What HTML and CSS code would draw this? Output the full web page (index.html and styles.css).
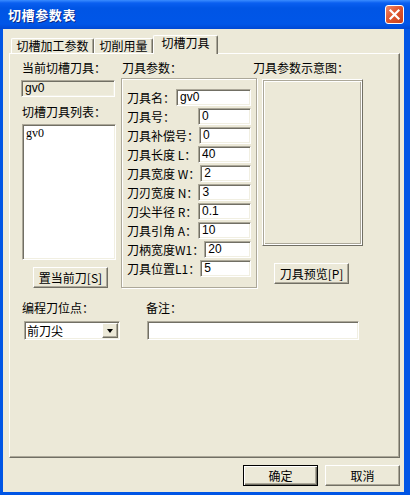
FILE: index.html
```html
<!DOCTYPE html>
<html lang="zh">
<head>
<meta charset="utf-8">
<title>切槽参数表</title>
<link rel="stylesheet" href="styles.css">
</head>
<body>
<div class="window">
  <div class="titlebar">
    <span class="title">切槽参数表</span>
    <span class="close">
      <svg width="17" height="17" viewBox="0 0 17 17"><path d="M4.5 4.5 L12.5 12.5 M12.5 4.5 L4.5 12.5" stroke="#fff" stroke-width="2.2" stroke-linecap="square"/></svg>
    </span>
  </div>
  <div class="client">
    <div class="tabs">
      <div class="tab tab-1">切槽加工参数</div>
      <div class="tab tab-2">切削用量</div>
      <div class="tab tab-3 active">切槽刀具</div>
    </div>
    <div class="panel">
      <div class="top">
        <div class="col-left">
          <div class="label">当前切槽刀具：</div>
          <div class="field readonly wide-left">gv0</div>
          <div class="label list-label">切槽刀具列表：</div>
          <div class="listbox"><div class="item">gv0</div></div>
          <div class="btn btn-set">置当前刀[S]</div>
        </div>
        <div class="col-mid">
          <div class="label">刀具参数：</div>
          <div class="group">
            <div class="row"><span>刀具名：</span><div class="field name">gv0</div></div>
            <div class="row"><span>刀具号：</span><div class="field num">0</div></div>
            <div class="row"><span>刀具补偿号：</span><div class="field num">0</div></div>
            <div class="row"><span>刀具长度 L：</span><div class="field num">40</div></div>
            <div class="row"><span>刀具宽度 W：</span><div class="field num">2</div></div>
            <div class="row"><span>刀刃宽度 N：</span><div class="field num">3</div></div>
            <div class="row"><span>刀尖半径 R：</span><div class="field num">0.1</div></div>
            <div class="row"><span>刀具引角 A：</span><div class="field num">10</div></div>
            <div class="row"><span>刀柄宽度W1：</span><div class="field num">20</div></div>
            <div class="row"><span>刀具位置L1：</span><div class="field num">5</div></div>
          </div>
        </div>
        <div class="col-right">
          <div class="label">刀具参数示意图：</div>
          <div class="frame"></div>
          <div class="btn btn-preview">刀具预览[P]</div>
        </div>
      </div>
      <div class="bottom">
        <div class="bcol-a">
          <div class="label">编程刀位点：</div>
          <div class="combo">
            <span class="combo-text">前刀尖</span>
            <span class="drop"><span class="arrow"></span></span>
          </div>
        </div>
        <div class="bcol-b">
          <div class="label">备注：</div>
          <div class="field note"></div>
        </div>
      </div>
    </div>
    <div class="buttons">
      <div class="btn default">确定</div>
      <div class="btn">取消</div>
    </div>
  </div>
</div>
</body>
</html>
```

FILE: styles.css
```css
* { box-sizing: border-box; }
html, body { margin: 0; padding: 0; }
body {
  width: 410px;
  height: 495px;
  overflow: hidden;
  font-family: "Noto Sans CJK SC", "Noto Sans", sans-serif;
  font-size: 12px;
  line-height: 14px;
  color: #000;
  background: #0055e5;
}
.window {
  width: 410px;
  height: 495px;
  display: flex;
  flex-direction: column;
  background: #0055e5;
}
.titlebar {
  height: 29px;
  flex: none;
  display: flex;
  align-items: center;
  justify-content: space-between;
  padding: 0 6px 0 8px;
  background: linear-gradient(#3a8cff 0px, #0a5ff0 3px, #0055e5 8px, #0056e8 24px, #0048d4 29px);
}
.title {
  color: #fff;
  font-weight: bold;
  font-size: 13px;
  line-height: 16px;
  letter-spacing: 0.6px;
  text-shadow: 1px 1px 0 #0a2a8a;
}
.close {
  width: 19px;
  height: 19px;
  border: 1px solid #fff;
  border-radius: 3px;
  background: linear-gradient(135deg, #ef8a6c 0%, #e0572f 45%, #c8401c 100%);
  display: flex;
  align-items: center;
  justify-content: center;
}
.close svg { display: block; }
.client {
  flex: 1;
  margin: 0 6px 3px 3px;
  background: #ece9d8;
  display: flex;
  flex-direction: column;
}
.tabs {
  height: 24px;
  flex: none;
  display: flex;
  align-items: flex-end;
  padding-left: 8px;
  position: relative;
  z-index: 1;
}
.tab {
  height: 15px;
  border-top: 1px solid #fff;
  border-left: 1px solid #fff;
  border-right: 1px solid #716f64;
  border-radius: 2px 2px 0 0;
  box-shadow: inset -1px 0 0 #aca899;
  text-align: center;
  line-height: 13px;
  background: #ece9d8;
}
.tab-1 { width: 83px; }
.tab-2 { width: 59px; }
.tab-3 { width: 65px; }
.tab.active {
  height: 19px;
  margin-bottom: -1px;
  line-height: 14px;
}
.panel {
  margin: 0 4px 0 6px;
  height: 405px;
  flex: none;
  border: 1px solid;
  border-color: #fff #716f64 #716f64 #fff;
  box-shadow: inset -1px -1px 0 #aca899;
  padding: 7px 0 0 11px;
}
.label { height: 14px; line-height: 14px; white-space: nowrap; }
.top { display: flex; align-items: flex-start; }
.col-left { width: 95px; flex: none; }
.col-left > .label { margin-left: 1px; }
.field {
  height: 17px;
  border: 1px solid;
  border-color: #aca899 #fff #fff #aca899;
  box-shadow: inset 1px 1px 0 #716f64, inset -1px -1px 0 #f1efe2;
  background: #fff;
  padding: 0 3px;
  line-height: 15px;
  font-family: "Liberation Sans", "Noto Sans CJK SC", sans-serif;
  font-size: 12px;
  white-space: nowrap;
  overflow: hidden;
}
.readonly { background: #ece9d8; margin-top: 5px; width: 94px; }
.list-label { margin-top: 8px; }
.listbox {
  margin: 5px 0 0 1px;
  width: 94px;
  height: 136px;
  border: 1px solid;
  border-color: #aca899 #fff #fff #aca899;
  box-shadow: inset 1px 1px 0 #716f64, inset -1px -1px 0 #f1efe2;
  background: #fff;
  padding: 2px 3px;
}
.item { font-family: "Liberation Serif", serif; font-size: 12px; line-height: 13px; }
.btn {
  width: 75px;
  height: 21px;
  border: 1px solid;
  border-color: #fff #716f64 #716f64 #fff;
  box-shadow: inset -1px -1px 0 #aca899;
  background: #ece9d8;
  display: flex;
  align-items: center;
  justify-content: center;
  white-space: nowrap;
}
.btn-set { margin: 7px 0 0 12px; }
.col-mid { width: 136px; flex: none; margin-left: 5px; }
.col-mid > .label { margin-left: 1px; }
.group {
  margin-top: 3px;
  height: 210px;
  border: 1px solid #aca899;
  box-shadow: inset 1px 1px 0 #fff, 1px 1px 0 #fff;
  padding: 10px 5px 0 5px;
  display: flex;
  flex-direction: column;
  gap: 2px;
}
.row {
  height: 17px;
  display: flex;
  align-items: center;
  justify-content: space-between;
  white-space: nowrap;
}
.field.name { width: 75px; }
.field.num { width: 53px; }
.col-right { width: 111px; flex: none; margin-left: -4px; }
.frame {
  margin: 4px 0 0 9px;
  width: 101px;
  height: 167px;
  border: 1px solid;
  border-color: #fff #716f64 #716f64 #fff;
  box-shadow: inset 1px 1px 0 #aca899, inset -1px -1px 0 #fff, inset 2px 2px 0 #fff, inset -2px -2px 0 #aca899;
}
.btn-preview { margin: 17px 0 0 21px; }
.bottom { display: flex; margin-top: 13px; }
.bcol-a { width: 125px; flex: none; }
.bcol-a > .label { margin-left: 1px; }
.combo {
  margin: 6px 0 0 3px;
  width: 96px;
  height: 19px;
  border: 1px solid;
  border-color: #aca899 #fff #fff #aca899;
  box-shadow: inset 1px 1px 0 #716f64, inset -1px -1px 0 #f1efe2;
  background: #fff;
  display: flex;
  align-items: center;
  justify-content: space-between;
  padding: 0 1px 0 2px;
}
.combo-text { line-height: 14px; }
.drop {
  width: 16px;
  height: 15px;
  border: 1px solid;
  border-color: #fff #716f64 #716f64 #fff;
  box-shadow: inset -1px -1px 0 #aca899;
  background: #ece9d8;
  display: flex;
  align-items: center;
  justify-content: center;
}
.arrow {
  width: 0;
  height: 0;
  border-left: 3.5px solid transparent;
  border-right: 3.5px solid transparent;
  border-top: 4px solid #000;
}
.bcol-b { flex: none; }
.field.note { margin: 6px 0 0 1px; width: 212px; height: 19px; }
.buttons {
  display: flex;
  justify-content: flex-end;
  gap: 7px;
  margin: 7px 4px 0 0;
}
.btn.default {
  border: 1px solid #000;
  box-shadow: inset 1px 1px 0 #fff, inset -1px -1px 0 #716f64, inset -2px -2px 0 #aca899;
}
```
